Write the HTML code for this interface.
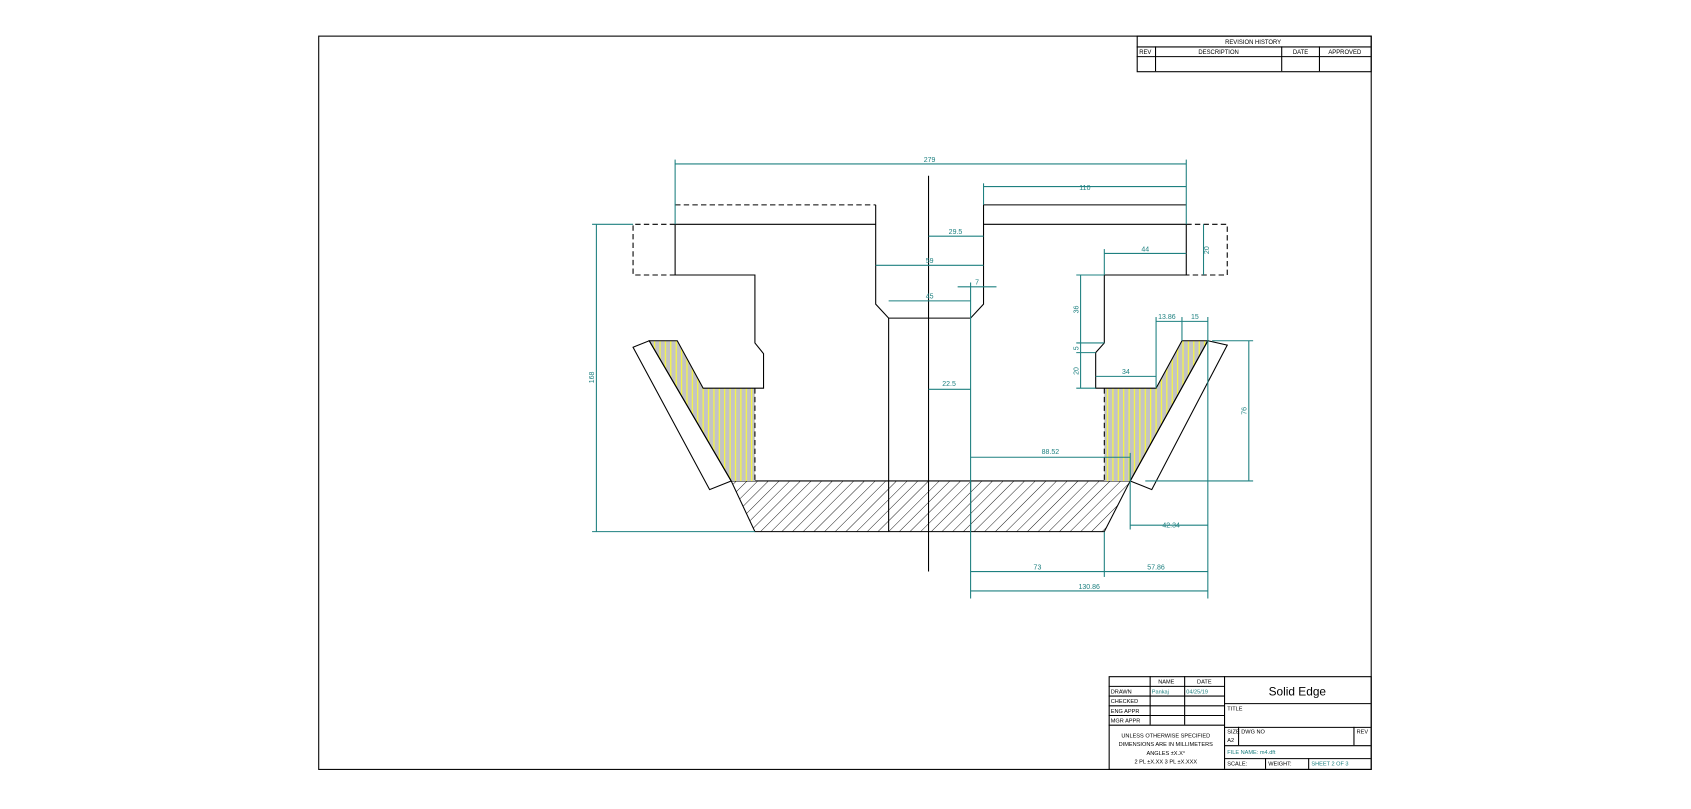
<!DOCTYPE html>
<html><head><meta charset="utf-8"><style>
html,body{margin:0;padding:0;background:#fff;}
svg{display:block;font-family:"Liberation Sans",sans-serif;}
</style></head><body>
<svg width="1691" height="809" viewBox="0 0 1568 750.2" xmlns="http://www.w3.org/2000/svg">
<defs>
<pattern id="hatch" patternUnits="userSpaceOnUse" width="7" height="7" patternTransform="rotate(45)">
<line x1="0" y1="0" x2="0" y2="7" stroke="#000" stroke-width="0.8"/>
</pattern>
<pattern id="yel" patternUnits="userSpaceOnUse" width="5" height="10">
<rect width="5" height="10" fill="#c4c4c4"/>
<line x1="2" y1="0" x2="2" y2="10" stroke="#ffff30" stroke-width="1"/>
</pattern>
</defs>
<rect width="1568" height="751" fill="#fff"/>
<rect x="295.5" y="33.5" width="976" height="680" fill="none" stroke="#000" stroke-width="1"/>

<!-- revision table -->
<g stroke="#000" stroke-width="1" fill="none">
<rect x="1054.5" y="33.5" width="217" height="33"/>
<line x1="1054" y1="43.5" x2="1271" y2="43.5"/>
<line x1="1054" y1="52.5" x2="1271" y2="52.5"/>
<line x1="1071.5" y1="43" x2="1071.5" y2="66"/>
<line x1="1188.5" y1="43" x2="1188.5" y2="66"/>
<line x1="1223.5" y1="43" x2="1223.5" y2="66"/>
</g>
<g font-size="5.5" fill="#000" text-anchor="middle">
<text x="1162" y="41">REVISION HISTORY</text>
<text x="1062" y="50">REV</text>
<text x="1130" y="50">DESCRIPTION</text>
<text x="1206" y="50">DATE</text>
<text x="1247" y="50">APPROVED</text>
</g>

<!-- title block -->
<g stroke="#000" stroke-width="1" fill="none">
<rect x="1028.5" y="627.5" width="243" height="86"/>
<line x1="1028" y1="636.5" x2="1135" y2="636.5"/>
<line x1="1028" y1="645.5" x2="1135" y2="645.5"/>
<line x1="1028" y1="654.5" x2="1135" y2="654.5"/>
<line x1="1028" y1="663.5" x2="1135" y2="663.5"/>
<line x1="1028" y1="672.5" x2="1135" y2="672.5"/>
<line x1="1066.5" y1="627" x2="1066.5" y2="672"/>
<line x1="1098.5" y1="627" x2="1098.5" y2="672"/>
<line x1="1135.5" y1="627" x2="1135.5" y2="713"/>
<line x1="1135" y1="652.5" x2="1271" y2="652.5"/>
<line x1="1135" y1="674.5" x2="1271" y2="674.5"/>
<line x1="1135" y1="691.5" x2="1271" y2="691.5"/>
<line x1="1135" y1="703.5" x2="1271" y2="703.5"/>
<line x1="1148.5" y1="674" x2="1148.5" y2="691"/>
<line x1="1255.5" y1="674" x2="1255.5" y2="691"/>
<line x1="1173.5" y1="703" x2="1173.5" y2="713"/>
<line x1="1213.5" y1="703" x2="1213.5" y2="713"/>
</g>
<g font-size="5.2" fill="#000">
<text x="1074" y="634">NAME</text>
<text x="1110" y="634">DATE</text>
<text x="1030" y="643">DRAWN</text>
<text x="1030" y="652">CHECKED</text>
<text x="1030" y="661">ENG APPR</text>
<text x="1030" y="670">MGR APPR</text>
<text x="1081" y="684" text-anchor="middle">UNLESS OTHERWISE SPECIFIED</text>
<text x="1081" y="692" text-anchor="middle">DIMENSIONS ARE IN MILLIMETERS</text>
<text x="1081" y="700" text-anchor="middle">ANGLES ±X.X°</text>
<text x="1081" y="708" text-anchor="middle">2 PL ±X.XX 3 PL ±X.XXX</text>
<text x="1138" y="659">TITLE</text>
<text x="1138" y="680">SIZE</text>
<text x="1138" y="688">A2</text>
<text x="1151" y="680">DWG NO</text>
<text x="1258" y="680">REV</text>
<text x="1138" y="710">SCALE:</text>
<text x="1176" y="710">WEIGHT:</text>
</g>
<g font-size="5.2" fill="#1e8080">
<text x="1068" y="643">Pankaj</text>
<text x="1100" y="643">04/25/19</text>
<text x="1138" y="699">FILE NAME: m4.dft</text>
<text x="1216" y="710">SHEET 2 OF 3</text>
</g>
<text x="1203" y="645" font-size="11" fill="#000" text-anchor="middle">Solid Edge</text>

<!-- fills -->
<polygon points="678,446 1048,446 1024,493 700,493" fill="url(#hatch)" stroke="#000" stroke-width="1"/>
<polygon points="602,316 628,316 652,360 700,360 700,446 678,446" fill="url(#yel)"/>
<polygon points="1096,316 1120,316 1048,446 1024,446 1024,360 1072,360" fill="url(#yel)"/>

<!-- geometry -->
<g stroke="#000" stroke-width="1" fill="none">
<polyline points="626,208 812,208"/>
<polyline points="626,208 626,255 700,255 700,318 708,328 708,360 652,360 628,316 602,316 678,446"/>
<polygon points="587,322 602,316 678,446 658,454"/>
<polyline points="812,190 812,282 824,295 900,295 912,282 912,190 1100,190"/>
<line x1="912" y1="208" x2="1100" y2="208"/>
<line x1="824" y1="295" x2="824" y2="493"/>
<polyline points="1100,208 1100,255 1024,255 1024,318 1016,327 1016,360 1072,360 1096,316 1120,316 1048,446"/>
<polygon points="1120,316 1138,320 1068,454 1048,446"/>
<line x1="861" y1="163" x2="861" y2="530"/>
<line x1="900" y1="446" x2="900" y2="493"/>
</g>
<g stroke="#000" stroke-width="1" fill="none" stroke-dasharray="5,3">
<polyline points="626,190 812,190"/>
<polyline points="626,208 587,208 587,255 626,255"/>
<polyline points="1100,208 1138,208 1138,255 1100,255"/>
<line x1="700" y1="360" x2="700" y2="446"/>
<line x1="1024" y1="360" x2="1024" y2="446"/>
</g>

<!-- dimensions -->
<g stroke="#1e8080" stroke-width="1" fill="none">
<line x1="626" y1="152" x2="1100" y2="152"/>
<line x1="626" y1="148" x2="626" y2="208"/>
<line x1="1100" y1="148" x2="1100" y2="208"/>
<line x1="912" y1="173" x2="1100" y2="173"/>
<line x1="912" y1="170" x2="912" y2="190"/>
<line x1="553" y1="208" x2="553" y2="493"/>
<line x1="549" y1="208" x2="587" y2="208"/>
<line x1="549" y1="493" x2="700" y2="493"/>
<line x1="861" y1="219" x2="912" y2="219"/>
<line x1="812" y1="246" x2="912" y2="246"/>
<line x1="824" y1="279" x2="900" y2="279"/>
<line x1="888" y1="266" x2="924" y2="266"/>
<line x1="900" y1="262" x2="900" y2="555"/>
<line x1="861" y1="361" x2="900" y2="361"/>
<line x1="900" y1="424" x2="1048" y2="424"/>
<line x1="1048" y1="420" x2="1048" y2="446"/>
<line x1="1024" y1="235" x2="1100" y2="235"/>
<line x1="1024" y1="231" x2="1024" y2="255"/>
<line x1="1116" y1="208" x2="1116" y2="255"/>
<line x1="1002" y1="255" x2="1002" y2="360"/>
<line x1="998" y1="255" x2="1024" y2="255"/>
<line x1="998" y1="318" x2="1024" y2="318"/>
<line x1="998" y1="327" x2="1016" y2="327"/>
<line x1="998" y1="360" x2="1016" y2="360"/>
<line x1="1016" y1="349" x2="1072" y2="349"/>
<line x1="1072" y1="298" x2="1120" y2="298"/>
<line x1="1072" y1="294" x2="1072" y2="360"/>
<line x1="1096" y1="294" x2="1096" y2="316"/>
<line x1="1120" y1="294" x2="1120" y2="555"/>
<line x1="1124" y1="316" x2="1162" y2="316"/>
<line x1="1062" y1="446" x2="1162" y2="446"/>
<line x1="1158" y1="316" x2="1158" y2="446"/>
<line x1="1048" y1="487" x2="1120" y2="487"/>
<line x1="1048" y1="446" x2="1048" y2="491"/>
<line x1="900" y1="530" x2="1120" y2="530"/>
<line x1="1024" y1="493" x2="1024" y2="535"/>
<line x1="900" y1="548" x2="1120" y2="548"/>
</g>
<g fill="#1e8080" font-size="6.5" text-anchor="middle">
<text x="862" y="150">279</text>
<text x="1006" y="176">110</text>
<text x="886" y="217">29.5</text>
<text x="862" y="244">59</text>
<text x="862" y="277">45</text>
<text x="906" y="264">7</text>
<text x="880" y="358">22.5</text>
<text x="974" y="421">88.52</text>
<text x="1062" y="233">44</text>
<text x="1082" y="296">13.86</text>
<text x="1108" y="296">15</text>
<text x="1044" y="347">34</text>
<text x="1086" y="489">42.34</text>
<text x="962" y="528">73</text>
<text x="1072" y="528">57.86</text>
<text x="1010" y="546">130.86</text>
<text transform="translate(551,350) rotate(-90)">168</text>
<text transform="translate(1121,232) rotate(-90)">20</text>
<text transform="translate(1000,287) rotate(-90)">36</text>
<text transform="translate(1000,323) rotate(-90)">5</text>
<text transform="translate(1000,344) rotate(-90)">20</text>
<text transform="translate(1156,381) rotate(-90)">76</text>
</g>
</svg>
</body></html>
